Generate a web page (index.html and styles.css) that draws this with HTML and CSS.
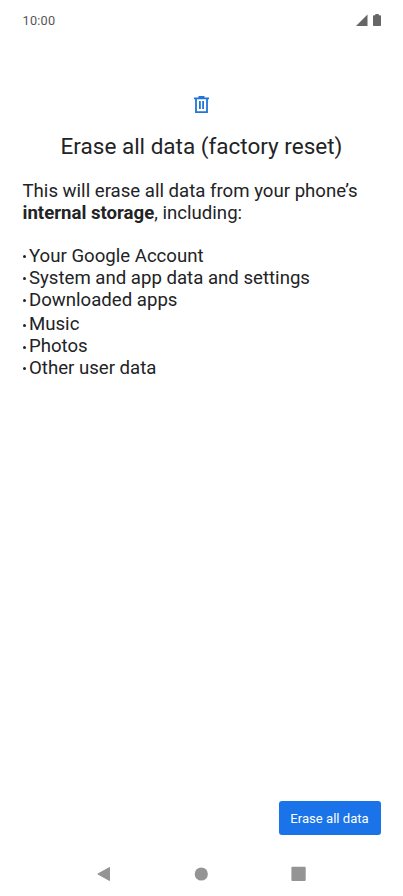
FILE: index.html
```html
<!DOCTYPE html>
<html lang="en">
<head>
<meta charset="utf-8">
<title>Erase all data</title>
<link rel="stylesheet" href="styles.css">
</head>
<body>
<div class="screen">
  <header class="status">
    <span class="time">10:00</span>
    <svg class="status-icons" width="27" height="14" viewBox="0 0 27 14"><path fill="#666" d="M0 13 11.500 1.500V13z"/><path fill="#666" d="M19.300 1h3.400v1.200h1.500q.8 0 .8.800v9.200q0 .8-.8.800h-6.400q-.8 0-.8-.800V3q0-.8.800-.800h1.500z"/></svg>
  </header>
  <main class="content">
    <svg class="trash" width="17" height="18" viewBox="0 0 17 18" fill="none" stroke="#2473d8" stroke-width="1.800"><path d="M1 2.300h15M5.500 1h6M3 2.500v13.600h11V2.500M6.900 5v8M10.100 5v8"/></svg>
    <h1 class="title">Erase all data (factory reset)</h1>
    <p class="intro">This will erase all data from your phone’s <b>internal storage</b>, including:</p>
    <ul class="list">
      <li>Your Google Account</li>
      <li>System and app data and settings</li>
      <li>Downloaded apps</li>
    </ul>
    <ul class="list more">
      <li>Music</li>
      <li>Photos</li>
      <li>Other user data</li>
    </ul>
  </main>
  <footer class="actions"><button class="erase">Erase all data</button></footer>
  <nav class="nav">
    <svg width="14" height="16" viewBox="0 0 14 16"><path fill="#949494" stroke="#949494" stroke-linejoin="round" d="M12.500 1.500v13L.8 8z"/></svg>
    <svg width="14" height="16" viewBox="0 0 14 16"><circle fill="#949494" cx="7.300" cy="8" r="6.600"/></svg>
    <svg width="15" height="16" viewBox="0 0 15 16"><rect fill="#949494" x=".4" y=".8" width="14.300" height="14.300" rx="1"/></svg>
  </nav>
</div>
</body>
</html>
```
FILE: styles.css
```css
* { box-sizing: border-box; }
body { margin: 0; background: #fff; font-family: Roboto, sans-serif; color: #222325; }
.screen { width: 403px; height: 896px; display: flex; flex-direction: column; }
.status { height: 40px; padding: 0 20px 0 22.500px; display: flex; justify-content: space-between; align-items: center; }
.time { font-size: 12.700px; font-weight: 400; color: #555; letter-spacing: 0.250px; line-height: 16px; padding-top: 1px; }
.content { flex: 1; padding: 56px 22.500px 0; }
.trash { display: block; margin: 0 auto; }
.title { margin: 19px 0 0; font-size: 22.500px; line-height: 27px; font-weight: 400; text-align: center; white-space: nowrap; }
.intro { margin: 20px 0 0; font-size: 18.620px; line-height: 22px; }
.list { margin: 22px 0 0; padding: 0; list-style: none; font-size: 18.620px; line-height: 21.800px; }
.list li { display: flex; align-items: center; white-space: nowrap; }
.list li::before { content: ""; width: 3px; height: 3px; border-radius: 50%; background: #222325; margin-right: 3.500px; }
.more { margin-top: 3px; }
.actions { display: flex; justify-content: flex-end; padding-right: 22.500px; height: 51px; }
.erase { width: 102px; height: 34px; border: 0; padding: 0; border-radius: 3px; background: #1a73e8; color: #fff; font: 400 13.100px Roboto, sans-serif; }
.nav { height: 44px; padding: 0 97px; display: flex; justify-content: space-between; align-items: center; }
```
